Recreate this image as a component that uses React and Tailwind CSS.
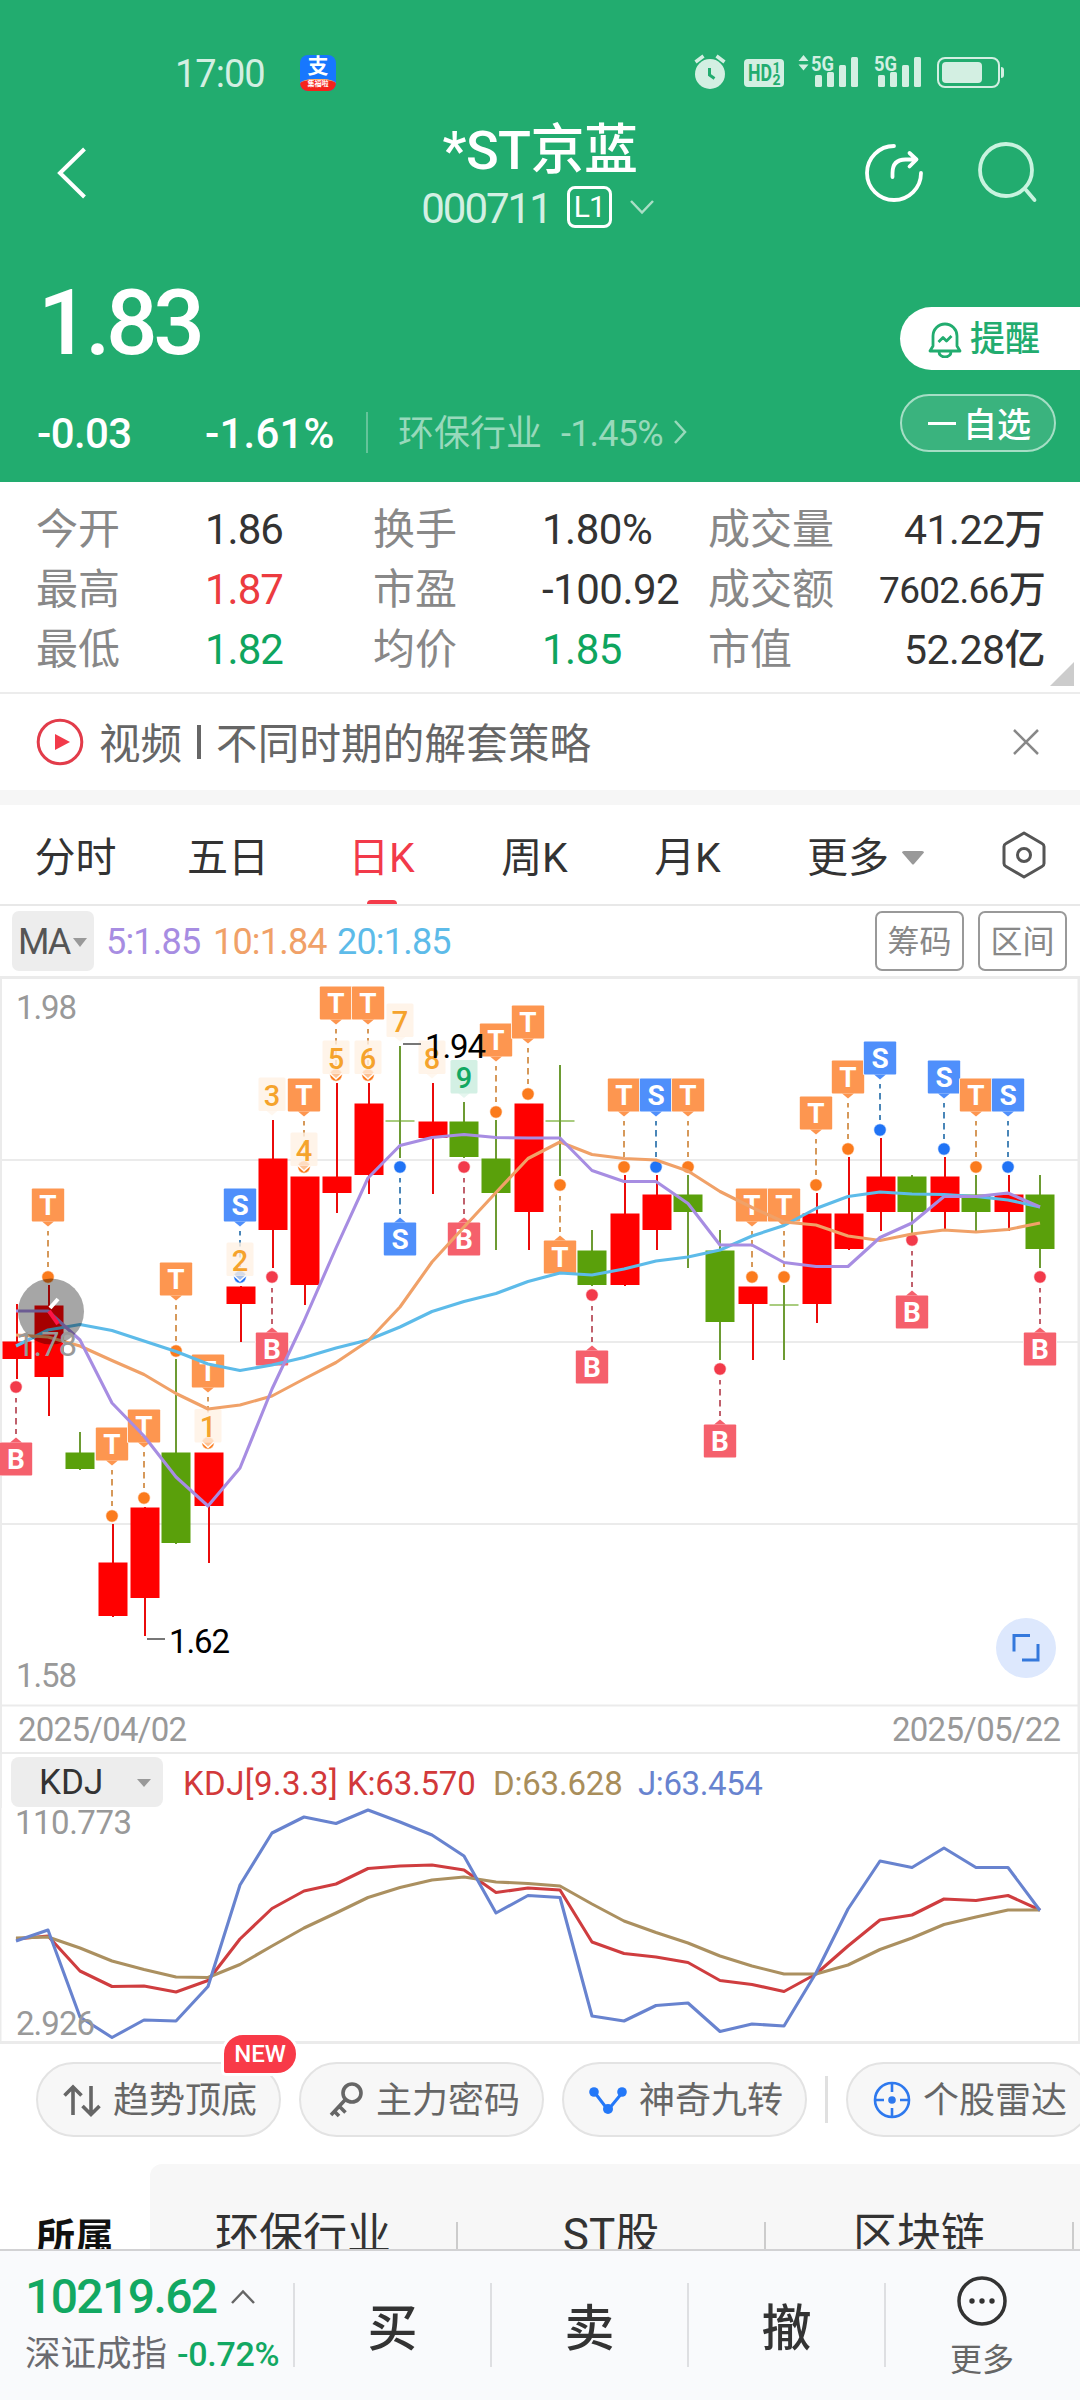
import React, { useState } from "react";

const RED = "#ff0000";
const GREEN = "#5aa00b";

// x position of a trading day on both charts
const dayX = (i) => 16 + i * 32;

// [up/down, wick top, body top, body bottom, wick bottom]
const candles = [
  ["up", 1304, 1342, 1359, 1379],
  ["up", 1285, 1306, 1377, 1416],
  ["down", 1432, 1453, 1469, 1470],
  ["up", 1524, 1563, 1616, 1617],
  ["up", 1507, 1508, 1598, 1636],
  ["down", 1359, 1453, 1543, 1544],
  ["up", 1453, 1453, 1506, 1563],
  ["up", 1286, 1287, 1304, 1342],
  ["up", 1120, 1159, 1230, 1268],
  ["up", 1177, 1177, 1285, 1305],
  ["up", 1083, 1177, 1193, 1213],
  ["up", 1083, 1104, 1175, 1194],
  ["flat", 1046, 1121, 1121, 1158],
  ["up", 1083, 1122, 1138, 1194],
  ["down", 1102, 1122, 1157, 1158],
  ["down", 1120, 1159, 1193, 1250],
  ["up", 1104, 1104, 1212, 1250],
  ["flat", 1065, 1121, 1121, 1176],
  ["down", 1230, 1251, 1285, 1286],
  ["up", 1175, 1214, 1285, 1286],
  ["up", 1175, 1195, 1230, 1250],
  ["down", 1175, 1195, 1212, 1268],
  ["down", 1230, 1251, 1322, 1360],
  ["up", 1287, 1287, 1304, 1360],
  ["flat", 1285, 1305, 1305, 1360],
  ["up", 1193, 1214, 1304, 1323],
  ["up", 1157, 1214, 1249, 1250],
  ["up", 1138, 1177, 1212, 1231],
  ["down", 1175, 1177, 1212, 1233],
  ["up", 1157, 1177, 1212, 1231],
  ["down", 1175, 1195, 1212, 1231],
  ["up", 1175, 1195, 1212, 1231],
  ["down", 1175, 1195, 1249, 1268],
];

const ma5 = [1311, 1311, 1340, 1403, 1436, 1477, 1506, 1468, 1389, 1321, 1248, 1178, 1145.5, 1137.5, 1134.5, 1137.5, 1138, 1138, 1170.5, 1181.5, 1181.5, 1203.5, 1245, 1245, 1262.5, 1266.5, 1266.5, 1237.5, 1223, 1196.5, 1196.5, 1193, 1207];
const ma10 = [1335, 1337, 1346, 1360.5, 1374.5, 1393.5, 1409, 1405, 1396, 1379, 1362.5, 1341, 1307, 1262, 1227, 1192.5, 1158.5, 1142, 1154.5, 1158.5, 1160, 1171, 1191.5, 1207.5, 1222, 1225, 1236, 1240.5, 1234, 1230, 1232, 1229.5, 1223];
const ma20 = [1346, 1330, 1324.5, 1330.5, 1341, 1351.5, 1364, 1370.5, 1365, 1357.5, 1348, 1340, 1327, 1311.5, 1301.5, 1293.5, 1281.5, 1273, 1275, 1269, 1261, 1257, 1250, 1236, 1225.5, 1208.5, 1196.5, 1192, 1194, 1194.5, 1196.5, 1200, 1207];

const kdjJ = [1941, 1930, 2017, 2037.5, 2020, 2021, 1986.5, 1885, 1833, 1817, 1823.5, 1810, 1822, 1835, 1856, 1913, 1895.5, 1897.5, 2016, 2021, 2005.5, 2003, 2031.5, 2024, 2026, 1973, 1909, 1861, 1867.5, 1848, 1867.5, 1867.5, 1910.5];
const kdjK = [1939, 1936, 1971, 1986.5, 1986, 1992, 1980.5, 1939, 1908.5, 1891, 1884, 1868.5, 1866, 1865, 1870, 1892.5, 1888, 1890, 1942, 1953.5, 1957, 1962.5, 1980.5, 1984.5, 1991.5, 1974, 1946, 1920, 1915, 1899, 1900.5, 1895.5, 1910];
const kdjD = [1938, 1937, 1948, 1961, 1969.5, 1977, 1977.5, 1964.5, 1946, 1928, 1913, 1897.5, 1887.5, 1880, 1877, 1882, 1883.5, 1886, 1904, 1921, 1932.5, 1943, 1956, 1966, 1974, 1974, 1965, 1949.5, 1938, 1924.5, 1917, 1910, 1910];

// [day, letter, dot y, tag below the dot]
const signals = [
  [0, "B", 1387, true],
  [1, "T", 1277],
  [3, "T", 1516],
  [4, "T", 1498],
  [5, "T", 1351],
  [6, "T", 1443],
  [7, "S", 1277],
  [8, "B", 1277, true],
  [9, "T", 1167],
  [10, "T", 1075],
  [11, "T", 1075],
  [12, "S", 1167, true],
  [14, "B", 1167, true],
  [15, "T", 1112],
  [16, "T", 1094],
  [17, "T", 1185, true],
  [18, "B", 1295, true],
  [19, "T", 1167],
  [20, "S", 1167],
  [21, "T", 1167],
  [22, "B", 1369, true],
  [23, "T", 1277],
  [24, "T", 1277],
  [25, "T", 1185],
  [26, "T", 1149],
  [27, "S", 1130],
  [28, "B", 1240, true],
  [29, "S", 1149],
  [30, "T", 1167],
  [31, "S", 1167],
  [32, "B", 1277, true],
];

const signalColors = {
  T: { tag: "#fd9650", dot: "#fb7b1d", line: "#d6995a" },
  S: { tag: "#4f8ffb", dot: "#2073f5", line: "#4a86b8" },
  B: { tag: "#f5606c", dot: "#f23a4a", line: "#c0606c" },
};

// [count, day, top of the tag]
const counts = [
  [1, 6, 1409],
  [2, 7, 1242.5],
  [3, 8, 1077.5],
  [4, 9, 1132.5],
  [5, 10, 1040.5],
  [6, 11, 1040.5],
  [7, 12, 1003.5],
  [8, 13, 1040.5],
  [9, 14, 1060],
];

const stats = [
  ["今开", "1.86", "换手", "1.80%", "成交量", "41.22万"],
  ["最高", "1.87", "市盈", "-100.92", "成交额", "7602.66万"],
  ["最低", "1.82", "均价", "1.85", "市值", "52.28亿"],
];

const statColors = {
  1.87: "text-[#ec3b3f]",
  1.82: "text-[#0ea55e]",
  1.85: "text-[#0ea55e]",
};

const Line = ({ data, color, width = 3.1 }) => (
  <polyline
    points={data.map((y, i) => `${dayX(i)},${y}`).join(" ")}
    fill="none"
    stroke={color}
    strokeWidth={width}
    strokeLinejoin="round"
  />
);

const Candle = ({ data, index }) => {
  const [type, high, top, bottom, low] = data;
  const x = dayX(index) + (type === "up" ? 1 : 0);
  if (type === "flat") {
    return (
      <g>
        <rect x={x - 14.5} y={top - 1} width="29" height="2" fill="#a9cc7f" />
        <rect x={x - 1} y={high} width="2" height={low - high} fill="#6d9b33" />
      </g>
    );
  }
  return (
    <g fill={type === "up" ? RED : GREEN}>
      <rect x={x - 1} y={high} width="2" height={low - high} fill={type === "up" ? "#ea0b0b" : "#6d9b33"} />
      <rect x={x - 14.5} y={top - 0.5} width="29" height={bottom - top + 0.5} />
    </g>
  );
};

const Signal = ({ day, letter, y, below }) => {
  const x = dayX(day);
  const c = signalColors[letter];
  const top = below ? y + 55.5 : y - 88.5;
  const tip = below
    ? `M${x - 6} ${top}L${x} ${top - 5}L${x + 6} ${top}Z`
    : `M${x - 6} ${top + 33}L${x} ${top + 38}L${x + 6} ${top + 33}Z`;
  return (
    <g>
      <line
        x1={x}
        x2={x}
        y1={below ? y + 11 : y - 46}
        y2={below ? y + 47 : y - 10}
        stroke={c.line}
        strokeWidth="2"
        strokeDasharray="6.5 4.5"
        strokeDashoffset="2"
      />
      <circle cx={x} cy={y} r="6.2" fill={c.dot} stroke="#fff" strokeWidth="0.6" />
      <rect x={x - 17} y={top - 0.5} width="34" height="34" rx="1.5" fill="#fff" />
      <rect x={x - 16.2} y={top} width="32.4" height="33" rx="1" fill={c.tag} />
      <path d={tip} fill={c.tag} />
      <text x={x} y={top + 26.5} textAnchor="middle" fontSize="28" fontWeight="700" fill="#fff">
        {letter}
      </text>
    </g>
  );
};

const CountTag = ({ n, day, y }) => {
  const x = dayX(day);
  const last = n === 9;
  return (
    <g>
      <rect x={x - 13.5} y={y} width="27" height="33.5" rx="1.5" fill={last ? "#d3f0e4" : "#fff2e4"} fillOpacity={last ? 1 : 0.82} />
      <path d={`M${x - 6} ${y + 33}L${x} ${y + 38}L${x + 6} ${y + 33}Z`} fill={last ? "#d3f0e4" : "#fff2e4"} fillOpacity="0.6" />
      {[1, 2, 4, 5, 6].includes(n) && (
        <path d={`M${x - 6} ${y + 33}L${x} ${y + 38.5}L${x + 6} ${y + 33}`} fill="none" stroke="#fff" strokeWidth="1.6" />
      )}
      <text x={x} y={y + 28} textAnchor="middle" fontSize="29" fontWeight="500" fill={last ? "#12a862" : "#f5a32c"}>
        {n}
      </text>
    </g>
  );
};

const KLineChart = () => (
  <svg viewBox="0 976 1080 778" className="block h-[778px] w-[1080px] shrink-0">
    <g fill="#ebebeb">
      <rect x="0" y="976" width="1080" height="3" />
      <rect x="0" y="1159" width="1080" height="2" />
      <rect x="0" y="1341" width="1080" height="2" />
      <rect x="0" y="1523" width="1080" height="2" />
      <rect x="0" y="1704.5" width="1080" height="2" />
      <rect x="0" y="1752" width="1080" height="2" />
      <rect x="0" y="976" width="2" height="778" />
      <rect x="1077.5" y="976" width="2.5" height="778" />
    </g>
    {candles.map((c, i) => (
      <Candle key={i} data={c} index={i} />
    ))}
    {signals.map(([day, letter, y, below]) => (
      <Signal key={day} day={day} letter={letter} y={y} below={below} />
    ))}
    {counts.map(([n, day, y]) => (
      <CountTag key={n} n={n} day={day} y={y} />
    ))}
    <Line data={ma20} color="#5dbbe9" />
    <Line data={ma10} color="#f0a168" />
    <Line data={ma5} color="#a78de2" />

    <g stroke="#777" strokeWidth="2">
      <path d="M403 1044h18M147 1639h18" />
    </g>
    <g fontSize="33" fill="#000">
      <text x="425" y="1058" textLength="61">1.94</text>
      <text x="169" y="1652.5" textLength="61">1.62</text>
    </g>

    <circle cx="51" cy="1311.5" r="33" fill="#000" fillOpacity="0.35" />
    <path d="M58 1299l-8 9" stroke="#fff" strokeWidth="4" />
    <path d="M49 1311l9 13" stroke="#ff1446" strokeWidth="4" />

    <g fontSize="33" fill="#999">
      <text x="16" y="1019" textLength="61">1.98</text>
      <text x="16" y="1355.5" textLength="61">1.78</text>
      <text x="16" y="1687" textLength="61">1.58</text>
      <text x="18" y="1740.5" textLength="169">2025/04/02</text>
      <text x="892" y="1740.5" textLength="169">2025/05/22</text>
    </g>

    <circle cx="1026" cy="1648" r="30" fill="#dde8fd" />
    <path d="M1030 1635.5h-16v16M1038 1644v16h-16" fill="none" stroke="#3478dc" strokeWidth="3" />
  </svg>
);

const KdjChart = () => (
  <svg viewBox="0 1808 1080 236" className="block h-[236px] w-[1080px] shrink-0">
    <g fill="#ebebeb">
      <rect x="0" y="1808" width="1.5" height="236" />
      <rect x="1078" y="1808" width="2" height="236" />
      <rect x="0" y="2041" width="1080" height="3" />
    </g>
    <Line data={kdjK} color="#cf3d3f" />
    <Line data={kdjD} color="#ab9060" />
    <Line data={kdjJ} color="#6883cf" />
    <g fontSize="33" fill="#999">
      <text x="15" y="1834" textLength="117">110.773</text>
      <text x="16" y="2034.5" textLength="79">2.926</text>
    </g>
  </svg>
);

const StatusBar = () => (
  <div className="flex h-[120px] items-start pt-[50px] pl-[175px]">
    <span className="mt-[5px] w-[125px] text-[38px] leading-[38px] tracking-[-1px] text-[#d3efe2]">17:00</span>
    <span className="mt-[5px] flex h-[36px] w-[36px] flex-col overflow-hidden rounded-[8px] bg-[#1777fe] text-center text-white">
      <span className="h-[24px] text-[21px] leading-[23px] font-bold">支</span>
      <span className="h-[12px] rounded-t-[40%] border-t border-[#ffb36b] bg-[#f5231c] text-[7px] leading-[9px] font-bold">集福啦</span>
    </span>
    <svg viewBox="690 50 320 45" className="ml-[354px] h-[45px] w-[320px]" fill="#d3efe2">
      <circle cx="710" cy="74" r="15" />
      <path d="M695.5 62l8-6M724.5 62l-8-6" stroke="#d3efe2" strokeWidth="3.5" />
      <path d="M709.5 68v7l5 3.5" fill="none" stroke="#22ac6f" strokeWidth="3" />
      <rect x="744" y="59" width="40" height="28" rx="4" />
      <g fill="#22ac6f" fontWeight="700">
        <text x="748" y="81" fontSize="23" textLength="24" lengthAdjust="spacingAndGlyphs">HD</text>
        <text x="772.5" y="73" fontSize="14">1</text>
        <text x="772.5" y="84.5" fontSize="14">2</text>
      </g>
      <path d="M803.5 55l5 6h-10zM803.5 70.5l5-6h-10z" />
      <g fontWeight="700" fontSize="21">
        <text x="811" y="70.5" textLength="23" lengthAdjust="spacingAndGlyphs">5G</text>
        <text x="874" y="70.5" textLength="23" lengthAdjust="spacingAndGlyphs">5G</text>
      </g>
      {[815, 878].map((x) => (
        <g key={x}>
          <rect x={x} y="75" width="7" height="12" rx="1.5" />
          <rect x={x + 12} y="72" width="7" height="15" rx="1.5" />
          <rect x={x + 24} y="65" width="7" height="22" rx="1.5" />
          <rect x={x + 36} y="57" width="7" height="30" rx="1.5" />
        </g>
      ))}
      <rect x="938" y="58" width="61" height="29" rx="7" fill="none" stroke="#d3efe2" strokeWidth="2" />
      <rect x="942" y="62" width="40" height="21" rx="4" />
      <path d="M1001 67a3 3 0 0 1 3 3v5a3 3 0 0 1-3 3z" />
    </svg>
  </div>
);

const Header = () => (
  <div className="h-[482px] shrink-0 bg-[#22ac6f] text-white">
    <StatusBar />
    <div className="flex h-[120px] justify-between">
      <svg viewBox="0 120 400 110" className="h-[110px] w-[400px]" fill="none" stroke="#fff" strokeWidth="4">
        <path d="M84.5 149L60 173l24.5 24" />
      </svg>
      <div className="flex w-[280px] flex-col items-center">
        <div className="mt-[2px] text-[54px] leading-[58px] font-medium tracking-[-0.5px]">*ST京蓝</div>
        <div className="mt-[5px] ml-[-4px] flex h-[44px] items-center">
          <span className="pt-[4px] text-[42px] leading-none tracking-[-2px] text-[#d3f0e3]">000711</span>
          <span className="ml-[16px] flex h-[42px] w-[45px] items-center justify-center rounded-[8px] border-[3px] border-white text-[30px] leading-none tracking-[-1px]">L1</span>
          <svg viewBox="0 0 26 16" className="ml-[17px] h-[16px] w-[26px]" fill="none" stroke="#a9dfc6" strokeWidth="2.5">
            <path d="M2 2l11 11.5L24 2" />
          </svg>
        </div>
      </div>
      <svg viewBox="680 120 400 110" className="h-[110px] w-[400px]" fill="none" stroke="#fff" strokeWidth="3.8" strokeLinecap="round">
        <path d="M894 146a27 27 0 1 0 27 27" />
        <path d="M892.5 177v-4q0-13.5 13-13.5h10M909.5 153l7 6.5-7 7" strokeLinejoin="round" />
        <g stroke="#c8f3df">
          <circle cx="1006" cy="170" r="26" />
          <path d="M1026 190l8.5 10" />
        </g>
      </svg>
    </div>
    <div className="flex justify-between">
      <div>
        <div className="mt-[38px] ml-[38px] text-[91px] leading-[91px] font-medium tracking-[-4.5px]">1.83</div>
        <div className="mt-[41px] flex h-[44px] items-center pl-[37px] text-[42px] leading-none font-medium">
          <span className="w-[168px] pt-[3px] tracking-[-0.6px]">-0.03</span>
          <span className="w-[161px] pt-[3px] tracking-[0.2px]">-1.61%</span>
          <span className="h-[41px] w-[2px] bg-[#64c49a]" />
          <span className="ml-[30px] pt-[3px] text-[36px] font-normal text-[#98d9bb]">环保行业</span>
          <span className="ml-[19px] pt-[3px] text-[36px] font-normal tracking-[-0.8px] text-[#98d9bb]">-1.45%</span>
          <svg viewBox="0 0 14 26" className="ml-[10px] h-[26px] w-[14px]" fill="none" stroke="#98d9bb" strokeWidth="2.5">
            <path d="M2 2l10 11L2 24" />
          </svg>
        </div>
      </div>
      <div className="flex w-[180px] flex-col pt-[67px]">
        <div className="flex h-[63px] items-center rounded-l-full bg-white pt-[2px] pl-[28px] text-[35px] leading-none font-medium text-[#22ac6f]">
          <svg viewBox="0 0 34 36" className="mr-[8px] h-[36px] w-[34px]" fill="none" stroke="#22ac6f" strokeWidth="2.8" strokeLinejoin="round">
            <path d="M5 24V14a12 12 0 0 1 24 0v10l3 5H2zM11 30a6 5 0 0 0 12 0M10.5 20l4.500-4.500 3.500 3.500 5-5" />
          </svg>
          提醒
        </div>
        <div className="mt-[24px] flex h-[58px] w-[156px] items-center rounded-full border-2 border-[#a5dec5] bg-[#3ab37e] pl-[26px] text-[34px] leading-none font-medium">
          <span className="mr-[7px] h-[3px] w-[28px] bg-white" />
          <span className="pt-[3px]">自选</span>
        </div>
      </div>
    </div>
  </div>
);

const Stats = () => (
  <div className="relative flex h-[212px] shrink-0 flex-col border-b-2 border-[#ececec] pt-[18px]">
    {stats.map((row) => (
      <div key={row[0]} className="flex h-[60px] items-center pl-[36px] text-[42px] leading-none">
        {row.map((cell, i) =>
          i % 2 === 0 ? (
            <span key={i} className={i === 4 ? "w-[150px] whitespace-nowrap text-[#888]" : "w-[169px] text-[#888]"}>
              {cell}
            </span>
          ) : i === 5 ? (
            <span key={i} className={`w-[187px] text-right font-[450] whitespace-nowrap text-[#333] ${cell.length > 7 ? "text-[37px] tracking-[-0.7px]" : "text-[41px] tracking-[-0.5px]"}`}>
              {cell}
            </span>
          ) : (
            <span key={i} className={`font-[450] whitespace-nowrap ${i === 1 ? "w-[168px] tracking-[-1px]" : "w-[166px] tracking-[-0.5px]"} ${statColors[cell] || "text-[#333]"}`}>
              {cell}
            </span>
          )
        )}
      </div>
    ))}
    <svg viewBox="0 0 24 24" className="absolute right-[6px] bottom-[6px] h-[24px] w-[24px]" fill="#ccc">
      <path d="M24 0v24H0z" />
    </svg>
  </div>
);

const VideoRow = () => (
  <div className="flex h-[96px] shrink-0 items-center bg-white pl-[36px] text-[41.5px] leading-none text-[#666]">
    <svg viewBox="0 0 48 48" className="h-[48px] w-[48px]" fill="none">
      <circle cx="24" cy="24" r="21.8" stroke="#e23c4a" strokeWidth="3" />
      <path d="M19 16l15 8-15 8z" fill="#f23a4a" />
    </svg>
    <span className="ml-[15px] pt-[5px]">视频</span>
    <span className="mx-[15px] h-[34px] w-[4px] bg-[#666]" />
    <span className="pt-[5px] tracking-[0.2px]">不同时期的解套策略</span>
    <svg viewBox="0 0 28 28" className="mr-[40px] ml-auto h-[28px] w-[28px]" stroke="#888" strokeWidth="2.5">
      <path d="M2 2l24 24M26 2L2 26" />
    </svg>
  </div>
);

const Tabs = () => {
  const [active, setActive] = useState("日K");
  const tabs = [
    ["分时", "w-[151px]"],
    ["五日", "w-[154px]"],
    ["日K", "w-[153px]"],
    ["周K", "w-[153px]"],
    ["月K", "w-[153px]"],
  ];
  return (
    <div className="flex h-[101px] shrink-0 border-b-2 border-[#e8e8e8] text-[41px] leading-none text-[#333]">
      {tabs.map(([name, width]) => (
        <button key={name} onClick={() => setActive(name)} className={`flex flex-col items-center justify-end ${width} ${active === name ? "text-[#f23a4a]" : ""}`}>
          <span className="mb-[21px]">{name}</span>
          <span className={`h-[4px] w-[30px] rounded-t ${active === name ? "bg-[#f43b4a]" : ""}`} />
        </button>
      ))}
      <div className="ml-[43px] flex w-[194px] items-center pt-[7px]">
        更多
        <svg viewBox="0 0 22 14" className="ml-[13px] h-[14px] w-[22px]" fill="#999">
          <path d="M0 1.5Q0 0 2 0h18q2 0 2 1.5L12 13q-1 1-2 0z" />
        </svg>
      </div>
      <svg viewBox="0 0 46 50" className="mt-[25px] h-[50px] w-[46px]" fill="none" stroke="#555" strokeWidth="3">
        <path d="M23 3l18 10.5q2 1 2 3v17q0 2-2 3L23 47 5 36.5q-2-1-2-3v-17q0-2 2-3z" strokeLinejoin="round" />
        <circle cx="23" cy="25" r="6.5" />
      </svg>
    </div>
  );
};

const MaRow = () => (
  <div className="flex h-[70px] shrink-0 items-center pl-[12px] text-[36px] leading-none">
    <div className="flex h-[60px] w-[82px] items-center rounded-[7px] bg-[#ededed] pt-[2px] pl-[6px] tracking-[-2px] text-[#555]">
      MA
      <svg viewBox="0 0 14 9" className="ml-[4px] h-[9px] w-[14px]" fill="#999">
        <path d="M0 0h14L7 9z" />
      </svg>
    </div>
    <span className="ml-[12px] w-[107px] pt-[2px] tracking-[-0.8px] text-[#a78de2]">5:1.85</span>
    <span className="w-[124px] pt-[2px] tracking-[-0.8px] text-[#f0a168]">10:1.84</span>
    <span className="pt-[2px] tracking-[-0.8px] text-[#5dbbe9]">20:1.85</span>
    <div className="mr-[13px] ml-auto flex gap-[14px] text-[32px] text-[#888]">
      <button className="h-[60px] w-[89px] rounded-[7px] border-2 border-[#999] pt-[2px]">筹码</button>
      <button className="h-[60px] w-[89px] rounded-[7px] border-2 border-[#999] pt-[2px]">区间</button>
    </div>
  </div>
);

const KdjLegend = () => (
  <div className="flex h-[54px] shrink-0 items-center border-x-2 border-[#ededed] pt-[1px] pl-[9px] text-[33px] leading-none">
    <div className="flex h-[50px] w-[152px] items-center justify-between rounded-[8px] bg-[#ededed] pt-[2px] pr-[12px] pl-[28px] text-[35px] text-[#333]">
      KDJ
      <svg viewBox="0 0 14 8" className="h-[8px] w-[14px]" fill="#999">
        <path d="M0 0h14L7 8z" />
      </svg>
    </div>
    <span className="ml-[20px] w-[164px] pt-[4px] tracking-[0.4px] text-[#d2393a]">KDJ[9.3.3]</span>
    <span className="w-[146px] pt-[4px] tracking-[-0.2px] text-[#d2393a]">K:63.570</span>
    <span className="w-[145px] pt-[4px] tracking-[-0.2px] text-[#a98e5b]">D:63.628</span>
    <span className="pt-[4px] tracking-[-0.4px] text-[#6883cf]">J:63.454</span>
  </div>
);

const Chip = ({ icon, children }) => (
  <button className="flex h-[75px] w-[245px] shrink-0 items-center rounded-full border-2 border-[#e3e3e3] bg-[#f7f7f7] pl-[24px] text-[36px] leading-none whitespace-nowrap text-[#666]">
    <svg viewBox="0 0 40 40" className="mr-[11px] h-[40px] w-[40px] shrink-0" fill="none">
      {icon}
    </svg>
    <span className="pt-[2px]">{children}</span>
  </button>
);

const Tools = () => (
  <div className="flex h-[120px] shrink-0 overflow-visible pt-[18px] pl-[36px]">
    <div className="relative mr-[18px]">
      <Chip icon={<path d="M11 35V7M2.5 15.5L11 7l8.5 8.5M29 6v28M20.5 26l8.5 8.5 8.5-8.5" stroke="#666" strokeWidth="3.6" />}>趋势顶底</Chip>
      <span className="absolute top-[-30px] left-[185px] flex h-[44px] w-[78px] items-center justify-center rounded-[22px] rounded-bl-[5px] border-[3px] border-white bg-[#f83a48] text-[24px] leading-none font-medium text-white">NEW</span>
    </div>
    <Chip
      icon={
        <g stroke="#666" strokeWidth="3.6">
          <circle cx="27" cy="13" r="9" />
          <path d="M20 20L6 35M14 26l6.500 6.500M9 31l5 5" />
        </g>
      }
    >
      主力密码
    </Chip>
    <div className="ml-[18px]">
      <Chip
        icon={
          <g fill="#2478f8">
            <path d="M7 13l13 17 14-17" fill="none" stroke="#2478f8" strokeWidth="3" />
            <circle cx="6" cy="12" r="4.8" />
            <circle cx="34" cy="12" r="4.8" />
            <circle cx="20" cy="29" r="5" />
          </g>
        }
      >
        神奇九转
      </Chip>
    </div>
    <div className="mx-[18px] mt-[14px] h-[47px] w-[3px] shrink-0 bg-[#e0e0e0]" />
    <Chip
      icon={
        <g stroke="#2e79ee" strokeWidth="2.6">
          <circle cx="20" cy="20" r="17" />
          <circle cx="20" cy="20" r="2.5" fill="#2e79ee" />
          <path d="M20 3v9M20 28v9M3 20h9M28 20h9" />
        </g>
      }
    >
      个股雷达
    </Chip>
  </div>
);

const Sectors = () => (
  <div className="flex h-[85px] shrink-0 overflow-hidden">
    <div className="w-[150px] pt-[50px] pl-[36px] text-[39px] leading-[48px] font-bold text-[#111]">所属</div>
    <div className="flex h-[140px] flex-1 overflow-hidden rounded-tl-[12px] bg-[#f7f7f7] text-[44px] leading-[52px] text-[#333]">
      {["环保行业", "ST股", "区块链"].map((name) => (
        <div key={name} className="flex w-[308px] shrink-0 justify-center">
          <span className="ml-auto pt-[45px]">{name}</span>
          <span className="mt-[58px] ml-auto h-[50px] w-[2px] bg-[#ccc]" />
        </div>
      ))}
    </div>
  </div>
);

const BottomBar = () => (
  <div className="flex h-[151px] shrink-0 items-start border-t-2 border-[#d2d2d4] bg-[#f9fafc] pl-[25px]">
    <div className="w-[268px] whitespace-nowrap">
      <div className="mt-[20px] flex items-center text-[48px] leading-[52px] font-medium tracking-[-1.6px] text-[#12a862]">
        10219.62
        <svg viewBox="0 0 26 16" className="ml-[13px] h-[16px] w-[26px]" fill="none" stroke="#666" strokeWidth="2.5">
          <path d="M2 14L13 2.5 24 14" />
        </svg>
      </div>
      <div className="mt-[11px] flex items-center text-[35.5px] leading-[40px] text-[#6b6b70]">
        深证成指
        <span className="ml-[10px] text-[34px] font-medium tracking-[-0.3px] text-[#12a862]">-0.72%</span>
      </div>
    </div>
    {["买", "卖", "撤"].map((name) => (
      <button key={name} className="mt-[32px] h-[84px] w-[197px] border-l-2 border-[#dedfe2] pt-[7px] text-[50px] leading-none font-medium text-[#333]">
        {name}
      </button>
    ))}
    <div className="mt-[32px] h-[84px] w-[2px] bg-[#dedfe2]" />
    <div className="mt-[24px] flex w-[192px] flex-col items-center text-[32px] leading-[36px] text-[#666]">
      <svg viewBox="0 0 52 52" className="h-[52px] w-[52px]" fill="none" stroke="#333" strokeWidth="3.5">
        <circle cx="26" cy="26" r="23" />
        <g fill="#333" stroke="none">
          <circle cx="16" cy="26" r="2.7" />
          <circle cx="26" cy="26" r="2.7" />
          <circle cx="36" cy="26" r="2.7" />
        </g>
      </svg>
      <span className="mt-[15px]">更多</span>
    </div>
  </div>
);

export default function App() {
  return (
    <div className="flex h-[2400px] w-[1080px] flex-col overflow-hidden bg-white font-[Roboto,'Noto_Sans_CJK_SC',sans-serif]">
      <Header />
      <Stats />
      <VideoRow />
      <div className="h-[15px] shrink-0 bg-[#f6f6f6]" />
      <Tabs />
      <MaRow />
      <KLineChart />
      <KdjLegend />
      <KdjChart />
      <Tools />
      <Sectors />
      <BottomBar />
    </div>
  );
}
